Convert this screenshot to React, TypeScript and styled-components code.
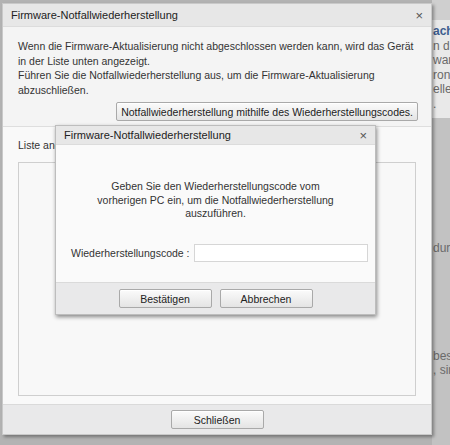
import styled, { createGlobalStyle } from 'styled-components'

const GlobalStyle = createGlobalStyle`
  html, body {
    margin: 0;
    padding: 0;
    background: #b8b8b8;
  }
  body {
    font-family: 'Liberation Sans', Arial, sans-serif;
    font-size: 10.5px;
    color: #333;
  }
`

const Page = styled.div`
  position: relative;
  width: 450px;
  height: 445px;
  overflow: hidden;
  display: flex;
  justify-content: flex-end;
  background: #b3b3b3;
`

const Underlay = styled.div`
  width: 18px;
  display: flex;
  flex-direction: column;
  padding-top: 8px;
  background: linear-gradient(#cfcfcf 0, #cfcfcf 20px, #e9e9e9 20px, #e9e9e9 118px, #c2c2c2 118px);
  color: #666;
  font-size: 12px;
  white-space: nowrap;
  overflow: hidden;
`

const UnderLine = styled.div<{ $top?: number; $bold?: boolean }>`
  margin-top: ${p => p.$top ?? 0}px;
  padding-left: 1px;
  height: 14.5px;
  line-height: 14.5px;
  font-weight: ${p => (p.$bold ? 700 : 400)};
  color: ${p => (p.$bold ? '#3d5d8f' : '#6a6a6a')};
`

const Window = styled.div`
  position: absolute;
  left: 2px;
  top: 3px;
  width: 430px;
  height: 432px;
  display: flex;
  flex-direction: column;
  background: #f7f7f7;
  border: 1px solid #c9c9c9;
  box-sizing: border-box;
  box-shadow: 2px 2px 3px rgba(0, 0, 0, 0.35);
`

const TitleBar = styled.div<{ $h: number }>`
  height: ${p => p.$h}px;
  flex: none;
  display: flex;
  align-items: center;
  justify-content: space-between;
  padding: 0 8px 0 8px;
  background: #e7e7e7;
  border-bottom: 1px solid #dcdcdc;
  color: #222;
  font-size: 11px;
`

const Close = styled.span`
  font-size: 13px;
  color: #555;
  line-height: 1;
`

const Intro = styled.div`
  flex: none;
  height: 100px;
  box-sizing: border-box;
  padding: 12px 15px 0 15px;
  display: flex;
  flex-direction: column;
  border-bottom: 1px solid #dedede;
  background: #f4f4f4;
`

const Para = styled.p`
  margin: 0;
  line-height: 14.5px;
`

const Button = styled.button<{ $w?: number }>`
  font-family: inherit;
  font-size: 10.5px;
  color: #222;
  height: 19px;
  width: ${p => (p.$w ? `${p.$w}px` : 'auto')};
  padding: 0 4px;
  border: 1px solid #a9a9a9;
  border-radius: 2px;
  background: linear-gradient(#fbfbfb, #e4e4e4);
  box-shadow: inset 0 1px 0 #fff;
`

const IntroButton = styled(Button)`
  align-self: flex-end;
  margin-top: 5px;
  margin-right: -2px;
`

const ListSection = styled.div`
  flex: 1;
  display: flex;
  flex-direction: column;
  padding: 11px 15px 8px 15px;
  background: #f9f9f9;
`

const ListLabel = styled.div`
  height: 14px;
  line-height: 14px;
  margin-bottom: 10px;
`

const ListBox = styled.div`
  flex: 1;
  border: 1px solid #cfcfcf;
  background: #f8f8f8;
`

const Footer = styled.div<{ $h: number }>`
  height: ${p => p.$h}px;
  flex: none;
  display: flex;
  align-items: center;
  justify-content: center;
  gap: 8px;
  background: #e9e9ea;
  border-top: 1px solid #dadada;
`

const Dialog = styled.div`
  position: absolute;
  left: 55px;
  top: 125px;
  width: 321px;
  height: 190px;
  display: flex;
  flex-direction: column;
  background: #f9f9f9;
  border: 1px solid #bdbdbd;
  box-sizing: border-box;
  box-shadow: 1px 2px 4px rgba(0, 0, 0, 0.45);
`

const DialogBody = styled.div`
  flex: 1;
  display: flex;
  flex-direction: column;
  align-items: center;
  padding: 35px 14px 0 14px;
  background: #fafafa;
`

const Centered = styled.p`
  margin: 0;
  text-align: center;
  line-height: 13.5px;
`

const FieldRow = styled.div`
  align-self: stretch;
  display: flex;
  align-items: center;
  margin-top: 23px;
  padding-left: 1px;
`

const FieldLabel = styled.span`
  flex: none;
  width: 123px;
  white-space: nowrap;
`

const Input = styled.input`
  flex: none;
  width: 174px;
  height: 18px;
  box-sizing: border-box;
  border: 1px solid #d6d6d6;
  background: #fff;
`

export default function App() {
  return (
    <>
      <GlobalStyle />
      <Page>
        <Underlay>
          <UnderLine $top={16} $bold>ache</UnderLine>
          <UnderLine>n d</UnderLine>
          <UnderLine>ware</UnderLine>
          <UnderLine>roni</UnderLine>
          <UnderLine>elle</UnderLine>
          <UnderLine>.</UnderLine>
          <UnderLine $top={130}>dur</UnderLine>
          <UnderLine $top={93}>bes</UnderLine>
          <UnderLine>, sin</UnderLine>
        </Underlay>

        <Window>
          <TitleBar $h={22}>
            <span>Firmware-Notfallwiederherstellung</span>
            <Close>×</Close>
          </TitleBar>
          <Intro>
            <Para>
              Wenn die Firmware-Aktualisierung nicht abgeschlossen werden kann, wird das Gerät in der Liste unten angezeigt.
            </Para>
            <Para>Führen Sie die Notfallwiederherstellung aus, um die Firmware-Aktualisierung abzuschließen.</Para>
            <IntroButton>Notfallwiederherstellung mithilfe des Wiederherstellungscodes.</IntroButton>
          </Intro>
          <ListSection>
            <ListLabel>Liste angeschlossener Geräte</ListLabel>
            <ListBox />
          </ListSection>
          <Footer $h={29}>
            <Button $w={93}>Schließen</Button>
          </Footer>
        </Window>

        <Dialog>
          <TitleBar $h={18}>
            <span>Firmware-Notfallwiederherstellung</span>
            <Close>×</Close>
          </TitleBar>
          <DialogBody>
            <Centered>
              Geben Sie den Wiederherstellungscode vom
              <br />
              vorherigen PC ein, um die Notfallwiederherstellung
              <br />
              auszuführen.
            </Centered>
            <FieldRow>
              <FieldLabel>Wiederherstellungscode :</FieldLabel>
              <Input />
            </FieldRow>
          </DialogBody>
          <Footer $h={31}>
            <Button $w={93}>Bestätigen</Button>
            <Button $w={93}>Abbrechen</Button>
          </Footer>
        </Dialog>
      </Page>
    </>
  )
}
